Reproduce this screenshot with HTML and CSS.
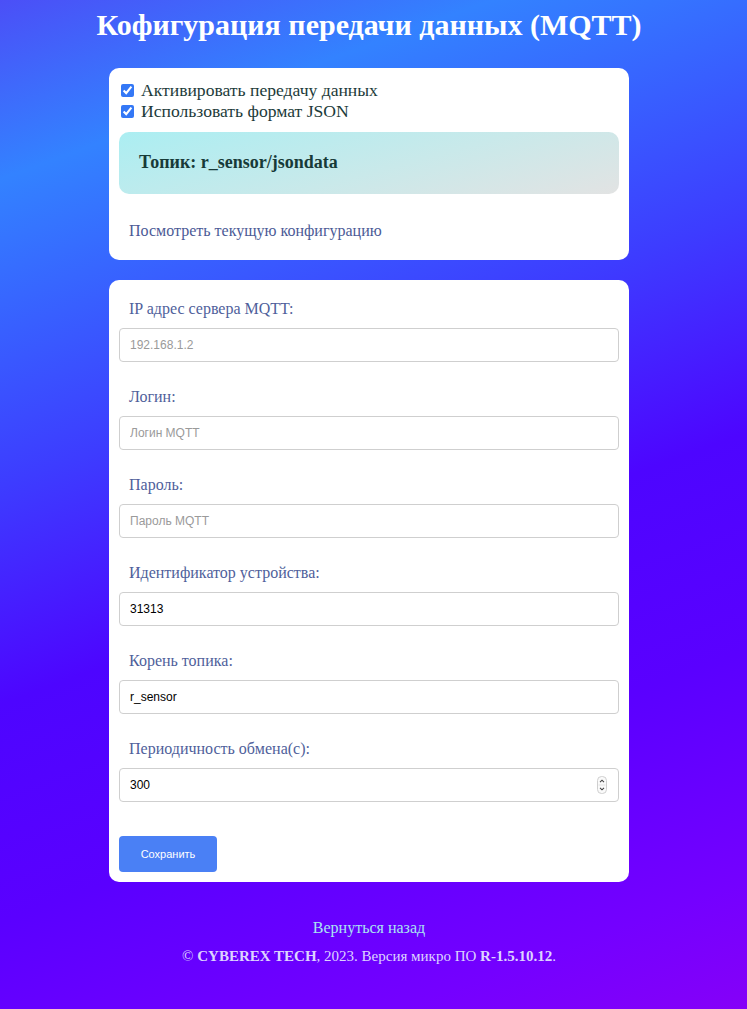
FILE: index.html
```html
<!DOCTYPE html>
<html lang="ru">
<head>
<meta charset="utf-8">
<title>MQTT</title>
<link rel="stylesheet" href="styles.css">
</head>
<body>
<div class="page">
  <h1 class="title">Кофигурация передачи данных (MQTT)</h1>
  <div class="card card-top">
    <label class="check"><input type="checkbox" checked> Активировать передачу данных</label>
    <label class="check"><input type="checkbox" checked> Использовать формат JSON</label>
    <div class="topic"><h3>Топик: r_sensor/jsondata</h3></div>
    <p class="view">Посмотреть текущую конфигурацию</p>
  </div>
  <form class="card card-form">
    <label class="lbl">IP адрес сервера MQTT:</label>
    <input class="field" type="text" placeholder="192.168.1.2">
    <label class="lbl">Логин:</label>
    <input class="field" type="text" placeholder="Логин MQTT">
    <label class="lbl">Пароль:</label>
    <input class="field" type="text" placeholder="Пароль MQTT">
    <label class="lbl">Идентификатор устройства:</label>
    <input class="field" type="text" value="31313">
    <label class="lbl">Корень топика:</label>
    <input class="field" type="text" value="r_sensor">
    <label class="lbl">Периодичность обмена(с):</label>
    <div class="num-wrap">
      <input class="field" type="number" value="300">
      <svg class="spin" width="10" height="18" viewBox="0 0 10 18">
        <rect x="0.5" y="0.5" width="9" height="17" rx="4" fill="#fafafa" stroke="#cfcfcf"/>
        <line x1="1.5" y1="9" x2="8.5" y2="9" stroke="#e2e2e2"/>
        <path d="M3 6.2 L5 4.2 L7 6.2" fill="none" stroke="#444" stroke-width="1.1"/>
        <path d="M3 11.8 L5 13.8 L7 11.8" fill="none" stroke="#444" stroke-width="1.1"/>
      </svg>
    </div>
    <button class="save" type="button">Сохранить</button>
  </form>
  <div class="footer">
    <a class="back">Вернуться назад</a>
    <p class="copy">© <b>CYBEREX TECH</b>, 2023. Версия микро ПО <b>R-1.5.10.12</b>.</p>
  </div>
</div>
</body>
</html>
```
FILE: styles.css
```css
html, body {
  margin: 0;
  padding: 0;
}
body {
  min-height: 1009px;
  background: linear-gradient(160deg, #4b4ff7 0%, #3382ff 14%, #3d3cff 38%, #4d05ff 55%, #5a00ff 72%, #7400ff 90%, #8500f8 100%);
  font-family: "Liberation Serif", "Times New Roman", serif;
}
.page {
  width: 738px;
  display: flex;
  flex-direction: column;
  align-items: center;
}
.title {
  margin: 7px 0 26px;
  font-size: 30px;
  line-height: 35px;
  color: #fff;
  font-weight: bold;
  text-align: center;
}
.card {
  width: 520px;
  box-sizing: border-box;
  background: #fff;
  border-radius: 10px;
  padding: 10px;
  display: flex;
  flex-direction: column;
}
.card-top {
  padding-top: 12px;
}
.check {
  display: flex;
  align-items: center;
  font-size: 17.6px;
  line-height: 21px;
  color: #1c3b3a;
  padding-left: 2px;
}
.check input {
  margin: 0 7px 0 0;
  width: 13px;
  height: 13px;
  accent-color: #3478f6;
}
.topic {
  margin-top: 10px;
  border-radius: 10px;
  padding: 20px;
  background: linear-gradient(165deg, #abeef2 0%, #c9e9ea 55%, #e2e3e3 100%);
}
.topic h3 {
  margin: 0;
  font-size: 18px;
  line-height: 21.5px;
  color: #173a38;
}
.view {
  margin: 18px 0 0;
  padding: 10px;
  font-size: 16px;
  line-height: 18px;
  color: #4b5a96;
}
.card-form {
  margin-top: 20px;
}
.lbl {
  display: block;
  padding: 10px;
  font-size: 16px;
  line-height: 18px;
  color: #4f5f9b;
}
.field {
  display: block;
  width: 500px;
  height: 34px;
  box-sizing: border-box;
  margin: 0 0 16px;
  padding: 0 10px;
  border: 1px solid #cfcfcf;
  border-radius: 4px;
  font-family: "Liberation Sans", Arial, sans-serif;
  font-size: 12px;
  color: #000;
  background: #fff;
}
.field::placeholder {
  color: #9a9a9a;
}
.field::-webkit-inner-spin-button,
.field::-webkit-outer-spin-button {
  -webkit-appearance: none;
  margin: 0;
}
.num-wrap {
  position: relative;
}
.spin {
  position: absolute;
  right: 12px;
  top: 8px;
}
.save {
  margin-top: 18px;
  width: 98px;
  height: 36px;
  border: none;
  border-radius: 4px;
  background: #4a80f5;
  color: #fff;
  font-family: "Liberation Sans", Arial, sans-serif;
  font-size: 11px;
  padding: 0;
}
.footer {
  margin-top: 37px;
  display: flex;
  flex-direction: column;
  align-items: center;
}
.back {
  font-size: 16px;
  line-height: 18px;
  color: #a9e4f2;
}
.copy {
  margin: 10px 0 0;
  font-size: 15px;
  line-height: 18px;
  color: #ddd3ff;
}
```
